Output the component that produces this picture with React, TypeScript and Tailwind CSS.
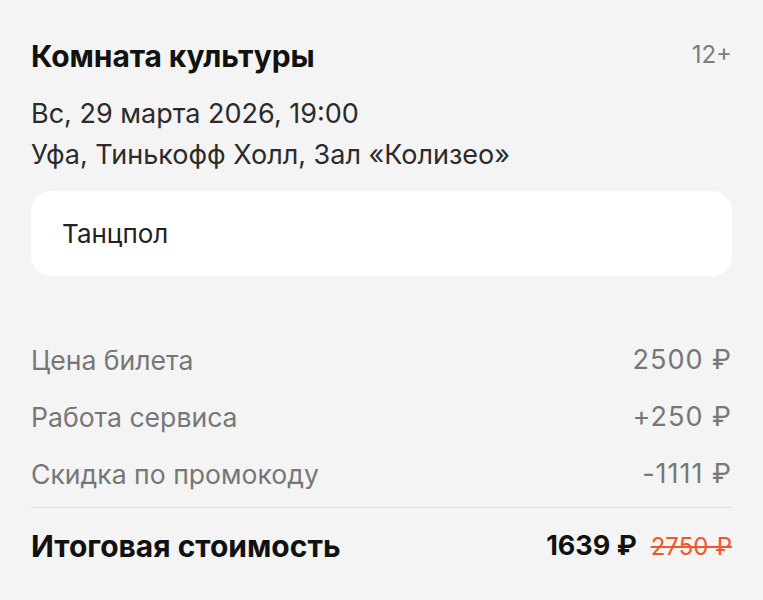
export default function App() {
  const rows = [
    { label: 'Цена билета', value: '2500 ₽' },
    { label: 'Работа сервиса', value: '+250 ₽' },
    { label: 'Скидка по промокоду', value: '-1111 ₽' },
  ];

  return (
    <div className="min-h-[600px] w-[763px] bg-[#f4f4f4] px-[31px] pt-[36px] font-['Inter',sans-serif] text-[#111]">
      <div className="flex items-start justify-between">
        <h1 className="text-[30px] font-bold leading-[40px] tracking-[-0.1px]">Комната культуры</h1>
        <span className="pt-[1px] text-[24px] leading-[36px] text-[#7d7d7d]">12+</span>
      </div>
      <div className="mt-[17px] text-[27px] leading-[41px] text-[#2b2b2b]">
        <div>Вс, 29 марта 2026, 19:00</div>
        <div>Уфа, Тинькофф Холл, Зал «Колизео»</div>
      </div>

      <div className="mt-[16px] flex h-[85px] items-center rounded-[20px] bg-white px-[31px]">
        <span className="text-[26px] text-[#222]">Танцпол</span>
      </div>

      <div className="mt-[56px] flex flex-col">
        {rows.map((r) => (
          <div key={r.label} className="flex h-[57px] items-center justify-between text-[#777]">
            <span className="text-[26.6px]">{r.label}</span>
            <span className="text-[27px] tracking-[1px]">{r.value}</span>
          </div>
        ))}
      </div>

      <div className="mt-[4px] border-t border-[#dedede]" />

      <div className="flex h-[76px] items-center justify-between">
        <span className="text-[30px] font-bold">Итоговая стоимость</span>
        <div className="flex items-baseline gap-[14px]">
          <span className="text-[27px] font-bold">1639 ₽</span>
          <span className="text-[24px] text-[#f0582c] line-through decoration-2">2750 ₽</span>
        </div>
      </div>
    </div>
  );
}
